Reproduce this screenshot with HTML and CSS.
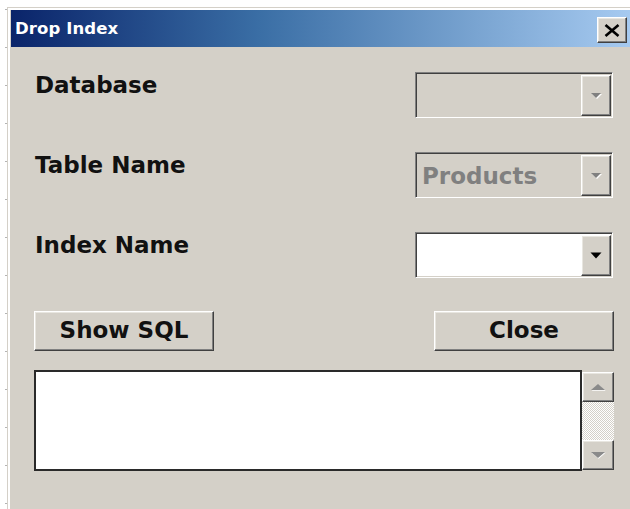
FILE: index.html
```html
<!DOCTYPE html>
<html lang="en">
<head>
<meta charset="utf-8">
<title>Drop Index</title>
<link rel="stylesheet" href="styles.css">
</head>
<body>
<div class="window">
  <div class="frame">
    <div class="titlebar">
      <span class="title">Drop Index</span>
      <button class="close-btn raised" aria-label="Close">
        <svg width="16" height="13" viewBox="0 0 16 13"><path d="M1.5 1 L14.5 12 M14.5 1 L1.5 12" stroke="#000" stroke-width="2.6" fill="none"/></svg>
      </button>
    </div>
    <div class="form">
      <div class="fields">
        <div class="field">
          <label class="label">Database</label>
          <div class="combo disabled">
            <span class="value"></span>
            <span class="drop raised"><svg class="arrow" width="12" height="7" viewBox="0 0 12 7"><path d="M1 1 H11 L6 6 Z" fill="#fff" transform="translate(1 1)"/><path d="M1 1 H11 L6 6 Z" fill="#808080"/></svg></span>
          </div>
        </div>
        <div class="field">
          <label class="label">Table Name</label>
          <div class="combo disabled">
            <span class="value">Products</span>
            <span class="drop raised"><svg class="arrow" width="12" height="7" viewBox="0 0 12 7"><path d="M1 1 H11 L6 6 Z" fill="#fff" transform="translate(1 1)"/><path d="M1 1 H11 L6 6 Z" fill="#808080"/></svg></span>
          </div>
        </div>
        <div class="field">
          <label class="label">Index Name</label>
          <div class="combo">
            <span class="value"></span>
            <span class="drop raised"><svg class="arrow" width="12" height="7" viewBox="0 0 12 7"><path d="M0.5 0.5 H11.5 L6 6.5 Z" fill="#000"/></svg></span>
          </div>
        </div>
      </div>
      <div class="actions">
        <button class="btn raised">Show SQL</button>
        <button class="btn raised">Close</button>
      </div>
      <div class="sql-box">
        <div class="sql-text"></div>
        <div class="vscroll">
          <span class="scroll-btn raised"><svg width="16" height="9" viewBox="0 0 16 9"><path d="M1 7 H15 L8 1 Z" fill="#fff" transform="translate(0.6 0.8)"/><path d="M1 7 H15 L8 1 Z" fill="#8a8a8a"/></svg></span>
          <span class="scroll-track"></span>
          <span class="scroll-btn raised"><svg width="16" height="9" viewBox="0 0 16 9"><path d="M1 1 H15 L8 7 Z" fill="#fff" transform="translate(0.6 0.8)"/><path d="M1 1 H15 L8 7 Z" fill="#8a8a8a"/></svg></span>
        </div>
      </div>
    </div>
  </div>
</div>
</body>
</html>
```
FILE: styles.css
```css
html, body {
  height: 100%;
}

body {
  margin: 0;
  overflow: hidden;
  font-family: "DejaVu Sans", "Liberation Sans", sans-serif;
  /* ruler ticks along the left edge */
  background:
    repeating-linear-gradient(to bottom, #b4b4b4 0 1px, transparent 1px 38px) 5px 9px / 2px 100% no-repeat,
    #ffffff;
}

.window {
  margin: 7px 0 0 7px;
  height: calc(100% - 7px);
  border-top: 1px solid #d4d0c8;
  border-left: 1px solid #d4d0c8;
  box-sizing: border-box;
}

.frame {
  height: 100%;
  box-sizing: border-box;
  border-top: 2px solid #ffffff;
  border-left: 2px solid #ffffff;
  padding-left: 1px;
  background: #d4d0c8;
}

/* bevels */
.raised {
  box-sizing: border-box;
  background: #d4d0c8;
  border-top: 1px solid #ffffff;
  border-left: 1px solid #ffffff;
  border-right: 1px solid #404040;
  border-bottom: 1px solid #404040;
  box-shadow: inset -1px -1px 0 #808080, inset 1px 1px 0 #e8e6e0;
}

/* title bar */
.titlebar {
  height: 37px;
  display: flex;
  align-items: flex-start;
  justify-content: space-between;
  padding: 0 3px 0 4px;
  background: linear-gradient(to right, #0a246a 0%, #3a6ea5 40%, #a6caf0 100%);
}

.title {
  color: #ffffff;
  font-weight: bold;
  font-size: 16.5px;
  line-height: 37px;
  letter-spacing: 0.1px;
}

.close-btn {
  margin-top: 7px;
  width: 30px;
  height: 26px;
  padding: 0;
  display: flex;
  align-items: center;
  justify-content: center;
}

/* form */
.form {
  padding: 25px 16px 0 23px;
}

.fields {
  display: flex;
  flex-direction: column;
  gap: 34px;
}

.field {
  height: 46px;
  display: flex;
  justify-content: space-between;
  align-items: flex-start;
}

.label {
  padding-left: 1px;
  font-weight: bold;
  font-size: 23px;
  line-height: 27px;
  color: #111111;
}

.combo {
  width: 198px;
  height: 46px;
  margin-right: 1px;
  box-sizing: border-box;
  display: flex;
  align-items: stretch;
  background: #ffffff;
  border-top: 1px solid #808080;
  border-left: 1px solid #808080;
  border-right: 1px solid #ffffff;
  border-bottom: 1px solid #ffffff;
  box-shadow: inset 1px 1px 0 #404040, inset -1px -1px 0 #d4d0c8;
  padding: 2px 1px 1px 2px;
}

.combo.disabled {
  background: #d4d0c8;
}

.value {
  flex: 1;
  display: flex;
  align-items: center;
  padding-left: 4px;
  font-weight: bold;
  font-size: 23px;
  color: #808080;
}

.drop {
  width: 30px;
  display: flex;
  align-items: center;
  justify-content: center;
}

.arrow {
  display: block;
}

/* buttons */
.actions {
  margin-top: 33px;
  display: flex;
  justify-content: space-between;
}

.btn {
  width: 180px;
  height: 40px;
  padding: 0 0 2px;
  font-family: inherit;
  font-weight: bold;
  font-size: 23px;
  color: #111111;
}

/* SQL preview */
.sql-box {
  margin-top: 19px;
  height: 101px;
  display: flex;
}

.sql-text {
  flex: 1;
  background: #ffffff;
  border: 2px solid #2a2a2a;
}

.vscroll {
  width: 32px;
  margin: 2px 0 1px;
  display: flex;
  flex-direction: column;
}

.scroll-btn {
  height: 30px;
  display: flex;
  align-items: center;
  justify-content: center;
}

.scroll-track {
  flex: 1;
  background: repeating-conic-gradient(#ffffff 0 25%, #d4d0c8 0 50%) 0 0 / 2px 2px;
}
```
